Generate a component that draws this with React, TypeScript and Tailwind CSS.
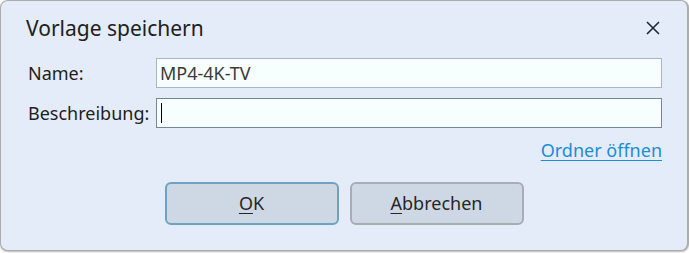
const font = { fontFamily: '"Segoe UI", "Noto Sans", sans-serif' };

const CloseIcon = () => (
  <svg width="14" height="14" viewBox="0 0 14 14" fill="none">
    <path d="M1 1L13 13M13 1L1 13" stroke="#1f2733" strokeWidth="1.6" />
  </svg>
);

const Field = ({ label, value, focused }: { label: string; value?: string; focused?: boolean }) => (
  <div className="flex items-center h-[30px]">
    <div className="w-[128px] text-[18px] text-[#1e1e1e] leading-none">{label}</div>
    <div
      className={`flex-1 h-[30px] flex items-center px-[3px] bg-[#f7fffe] border ${
        focused ? "border-[#7a8592]" : "border-[#aab5c2]"
      }`}
    >
      {value ? (
        <span className="text-[18px] text-[#3a3a3a] leading-none">{value}</span>
      ) : null}
      {focused ? <span className="ml-[1px] w-px h-[20px] bg-black" /> : null}
    </div>
  </div>
);

export default function App() {
  return (
    <div className="w-[689px] h-[253px] bg-white" style={font}>
      <div className="h-[251px] rounded-[8px] border border-[#adadad] border-r-2 bg-[#e3ecf8] flex flex-col shadow-[0_1px_2px_rgba(0,0,0,0.3)]">
        <div className="h-[54px] flex items-center justify-between pl-[25px] pr-[27px]">
          <span className="text-[21px] text-[#202020] leading-none">Vorlage speichern</span>
          <CloseIcon />
        </div>
        <div className="mt-[3px] pl-[27px] pr-[25px] flex flex-col gap-[10px]">
          <Field label="Name:" value="MP4-4K-TV" />
          <Field label="Beschreibung:" focused />
        </div>
        <div className="mt-[11px] pr-[25px] flex justify-end h-[22px] items-center">
          <a className="text-[18px] leading-none text-[#1a8ed6] underline underline-offset-[3px] cursor-pointer">
            Ordner öffnen
          </a>
        </div>
        <div className="mt-[21px] flex justify-center gap-[11px]">
          <button className="w-[174px] h-[43px] rounded-[6px] border-2 border-[#6fa2c0] bg-[#ced8e4] text-[18px] text-[#262626]">
            <span className="underline underline-offset-[3px]">O</span>K
          </button>
          <button className="w-[174px] h-[43px] rounded-[6px] border-2 border-[#a7adb5] bg-[#ced8e4] text-[18px] text-[#262626]">
            <span className="underline underline-offset-[3px]">A</span>bbrechen
          </button>
        </div>
      </div>
    </div>
  );
}
